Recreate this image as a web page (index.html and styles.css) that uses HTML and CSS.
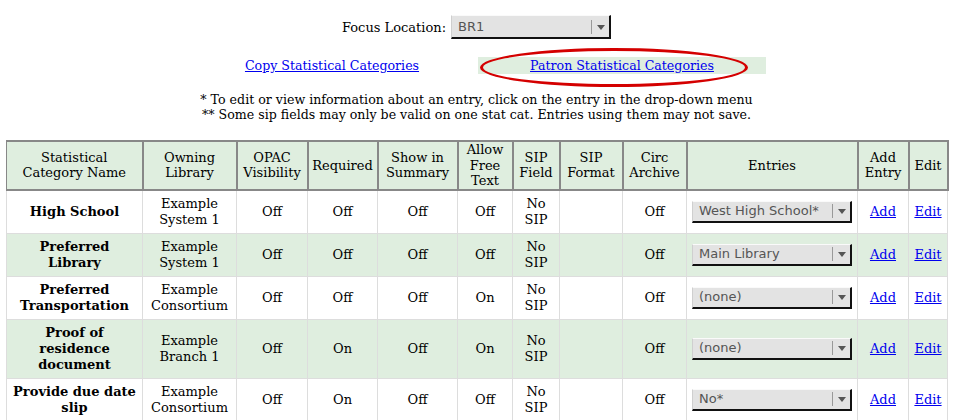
FILE: index.html
```html
<!DOCTYPE html>
<html lang="en">
<head>
  <meta charset="UTF-8" />
  <title>Patron Statistical Categories</title>
  <link rel="stylesheet" href="styles.css">
</head>
<body>

  <!-- Focus location picker -->
  <div class="focus">
    <label>Focus Location:</label>
    <div class="fake-select wide">
      <span class="sel-text">BR1</span>
      <span class="sel-arrow"></span>
    </div>
  </div>

  <!-- Tabs between stat cat pages -->
  <div class="tabs">
    <div class="tab"><a href="#">Copy Statistical Categories</a></div>
    <div class="tab active">
      <a href="#">Patron Statistical Categories</a>
      <span class="circle"></span>
    </div>
  </div>

  <div class="notes">
    <div>* To edit or view information about an entry, click on the entry in the drop-down menu</div>
    <div>** Some sip fields may only be valid on one stat cat. Entries using them may not save.</div>
  </div>

  <table class="statcats">
    <colgroup>
      <col class="c-name">
      <col class="c-owner">
      <col class="c-opac">
      <col class="c-req">
      <col class="c-sum">
      <col class="c-free">
      <col class="c-sip">
      <col class="c-fmt">
      <col class="c-circ">
      <col class="c-entries">
      <col class="c-add">
      <col class="c-edit">
    </colgroup>
    <tr>
      <th>Statistical<br>Category Name</th>
      <th>Owning<br>Library</th>
      <th>OPAC<br>Visibility</th>
      <th>Required</th>
      <th>Show in<br>Summary</th>
      <th>Allow<br>Free<br>Text</th>
      <th>SIP<br>Field</th>
      <th>SIP<br>Format</th>
      <th>Circ<br>Archive</th>
      <th>Entries</th>
      <th>Add<br>Entry</th>
      <th>Edit</th>
    </tr>
    <tr>
      <td class="name">High School</td>
      <td>Example<br>System 1</td>
      <td>Off</td><td>Off</td><td>Off</td><td>Off</td>
      <td>No<br>SIP</td><td></td><td>Off</td>
      <td><div class="fake-select"><span class="sel-text">West High School*</span><span class="sel-arrow"></span></div></td>
      <td><a href="#">Add</a></td><td><a href="#">Edit</a></td>
    </tr>
    <tr class="alt">
      <td class="name">Preferred<br>Library</td>
      <td>Example<br>System 1</td>
      <td>Off</td><td>Off</td><td>Off</td><td>Off</td>
      <td>No<br>SIP</td><td></td><td>Off</td>
      <td><div class="fake-select"><span class="sel-text">Main Library</span><span class="sel-arrow"></span></div></td>
      <td><a href="#">Add</a></td><td><a href="#">Edit</a></td>
    </tr>
    <tr>
      <td class="name">Preferred<br>Transportation</td>
      <td>Example<br>Consortium</td>
      <td>Off</td><td>Off</td><td>Off</td><td>On</td>
      <td>No<br>SIP</td><td></td><td>Off</td>
      <td><div class="fake-select"><span class="sel-text">(none)</span><span class="sel-arrow"></span></div></td>
      <td><a href="#">Add</a></td><td><a href="#">Edit</a></td>
    </tr>
    <tr class="alt">
      <td class="name">Proof of<br>residence<br>document</td>
      <td>Example<br>Branch 1</td>
      <td>Off</td><td>On</td><td>Off</td><td>On</td>
      <td>No<br>SIP</td><td></td><td>Off</td>
      <td><div class="fake-select"><span class="sel-text">(none)</span><span class="sel-arrow"></span></div></td>
      <td><a href="#">Add</a></td><td><a href="#">Edit</a></td>
    </tr>
    <tr>
      <td class="name">Provide due date<br>slip</td>
      <td>Example<br>Consortium</td>
      <td>Off</td><td>On</td><td>Off</td><td>Off</td>
      <td>No<br>SIP</td><td></td><td>Off</td>
      <td><div class="fake-select"><span class="sel-text">No*</span><span class="sel-arrow"></span></div></td>
      <td><a href="#">Add</a></td><td><a href="#">Edit</a></td>
    </tr>
  </table>

</body>
</html>
```

FILE: styles.css
```css
body {
  margin: 0;
  font-family: 'DejaVu Serif', serif;
  font-size: 13px;
  color: #000;
  background: #fff;
}

a {
  color: #0000ee;
  text-decoration: underline;
}

/* focus location */
.focus {
  display: flex;
  justify-content: center;
  align-items: center;
  gap: 5px;
  margin-top: 15px;
}

.fake-select {
  display: flex;
  align-items: center;
  width: 160px;
  height: 22px;
  box-sizing: border-box;
  background: #e3e3e3;
  border-style: solid;
  border-width: 1px 2px 2px 1px;
  border-color: #fafafa #111 #111 #cfcfcf;
  font-family: 'DejaVu Sans', sans-serif;
  font-size: 13px;
  color: #555;
  text-align: left;
}

.fake-select.wide {
  height: 24px;
}

.sel-text {
  flex: 1;
  padding-left: 6px;
  white-space: nowrap;
  overflow: hidden;
}

.sel-arrow {
  width: 17px;
  height: 14px;
  border-left: 1px solid #999;
  position: relative;
}

.sel-arrow::after {
  content: '';
  position: absolute;
  left: 5px;
  top: 5px;
  border-left: 4px solid transparent;
  border-right: 4px solid transparent;
  border-top: 5px solid #555;
}

/* tabs */
.tabs {
  display: flex;
  justify-content: center;
  gap: 26px;
  padding-left: 25px;
  margin-top: 18px;
  line-height: 17px;
  font-size: 12.6px;
}

.tab {
  width: 240px;
  text-align: center;
}

.tab.active {
  width: 288px;
  background: #dfeedf;
  position: relative;
}

.circle {
  position: absolute;
  left: 2px;
  top: -9px;
  width: 268px;
  height: 39px;
  box-sizing: border-box;
  border: 3px solid #d40000;
  border-radius: 50%;
}

.notes {
  text-align: center;
  margin-top: 18px;
  line-height: 15px;
  font-size: 12.6px;
}

/* table */
.statcats {
  border-collapse: collapse;
  table-layout: fixed;
  width: 941px;
  margin: 18px 0 0 6px;
}

.c-name { width: 136px; }
.c-owner { width: 94px; }
.c-opac { width: 71px; }
.c-req { width: 70px; }
.c-sum { width: 80px; }
.c-free { width: 55px; }
.c-sip { width: 47px; }
.c-fmt { width: 63px; }
.c-circ { width: 64px; }
.c-entries { width: 171px; }
.c-add { width: 51px; }
.c-edit { width: 39px; }

.statcats th {
  background: #dfeedf;
  border: 1px solid #888;
  border-width: 2px 2px 2px 1px;
  font-weight: normal;
  line-height: 15.5px;
  padding: 0 2px;
  text-align: center;
  vertical-align: middle;
}

.statcats td {
  border: 1px solid #ddd;
  line-height: 16px;
  padding: 5px 2px;
  text-align: center;
  vertical-align: middle;
}

.statcats tr.alt td {
  background: #dfeedf;
}

.statcats td.name {
  font-weight: bold;
}

.statcats td .fake-select {
  margin: 0 auto;
}
```
